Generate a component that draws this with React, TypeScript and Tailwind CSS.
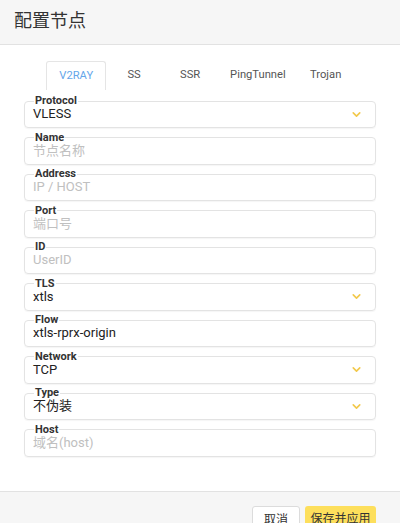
import React from 'react'
import { ChevronDown } from 'lucide-react'

const tabs = ['V2RAY', 'SS', 'SSR', 'PingTunnel', 'Trojan']

const fields = [
  { label: 'Protocol', value: 'VLESS', select: true },
  { label: 'Name', placeholder: '节点名称' },
  { label: 'Address', placeholder: 'IP / HOST' },
  { label: 'Port', placeholder: '端口号' },
  { label: 'ID', placeholder: 'UserID' },
  { label: 'TLS', value: 'xtls', select: true },
  { label: 'Flow', value: 'xtls-rprx-origin' },
  { label: 'Network', value: 'TCP', select: true },
  { label: 'Type', value: '不伪装', select: true },
  { label: 'Host', placeholder: '域名(host)' },
]

function Field({ label, value, placeholder, select }: { label: string; value?: string; placeholder?: string; select?: boolean }) {
  return (
    <fieldset className="border border-[#e3e3e3] rounded-[4px] h-[33px] shadow-[0_1px_1px_rgba(0,0,0,0.04)]">
      <legend className="ml-[9px] px-[1px] text-[11px] leading-[12px] font-bold text-[#333]">{label}</legend>
      <div className="flex items-center justify-between pl-[8px] pr-[12px] -mt-[1px] h-[16px]">
        <span className={`text-[13px] leading-[16px] ${value ? 'text-[#222]' : 'text-[#c0c0c0]'}`}>
          {value ?? placeholder}
        </span>
        {select && <ChevronDown size={13} strokeWidth={3} className="text-[#f2c94c]" />}
      </div>
    </fieldset>
  )
}

export default function App() {
  return (
    <div className="w-[400px] h-[523px] overflow-hidden flex flex-col bg-white font-['Roboto','Noto_Sans_CJK_SC',sans-serif]">
      <div className="h-[45px] shrink-0 bg-[#f6f6f6] border-b border-[#e2e2e2] flex items-center px-[14px] pb-[3px]">
        <h1 className="text-[18px] text-[#333]">配置节点</h1>
      </div>

      <div className="flex-1 pt-[16px]">
        <div className="flex justify-center">
          {tabs.map((t, i) => (
            <div
              key={t}
              className={`min-w-[56px] h-[29px] px-3 flex items-center justify-center text-[11.2px] ${
                i === 0 ? 'border border-b-0 border-[#e5e5e5] rounded-t-[3px] text-[#64a6ea]' : 'text-[#555]'
              }`}
            >
              {t}
            </div>
          ))}
        </div>

        <div className="mt-[5px] mx-[24px] flex flex-col gap-[3.5px]">
          {fields.map((f) => (
            <Field key={f.label} {...f} />
          ))}
        </div>
      </div>

      <div className="h-[32px] shrink-0 bg-[#f6f6f6] border-t border-[#e2e2e2] flex justify-end gap-[5px] pr-[24px] pt-[14px]">
        <button className="h-[30px] px-[11px] bg-white border border-[#dcdcdc] rounded-[3px] text-[12px] leading-[14px] text-[#333] flex items-start pt-[6px]">
          取消
        </button>
        <button className="h-[30px] w-[71px] bg-[#fddf5c] rounded-[3px] text-[12px] leading-[14px] text-[#333] flex items-start justify-center pt-[6px]">
          保存并应用
        </button>
      </div>
    </div>
  )
}
